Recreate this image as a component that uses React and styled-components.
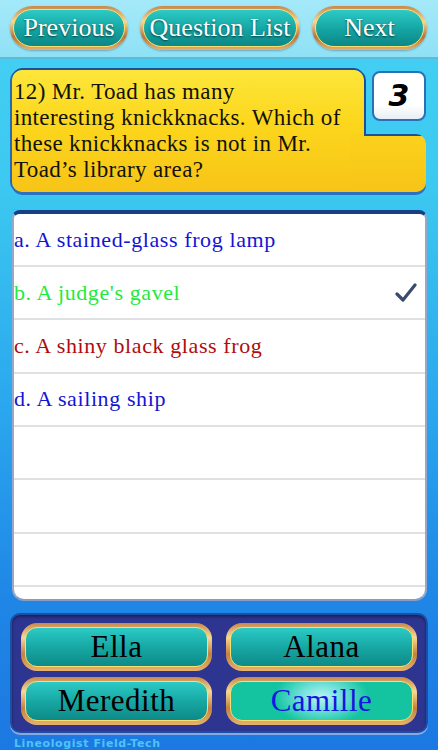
import React from "react";
import styled, { createGlobalStyle } from "styled-components";

const GlobalStyle = createGlobalStyle`
  html, body {
    margin: 0;
    padding: 0;
    background: #1a78e0;
  }
`;

const Screen = styled.div`
  width: 438px;
  height: 750px;
  overflow: hidden;
  display: flex;
  flex-direction: column;
  background: linear-gradient(180deg, #45d2f4 0%, #3cc8f0 25%, #2aa6ee 55%, #1f86e6 80%, #1c78e2 100%);
  font-family: "Liberation Serif", "Times New Roman", serif;
`;

const TopBar = styled.div`
  height: 59px;
  display: flex;
  align-items: center;
  gap: 12px;
  padding: 0 10px;
  box-sizing: border-box;
  background: linear-gradient(180deg, #a4e9f9 0%, #8fe1f6 100%);
  border-bottom: 2px solid #5bbbd8;
`;

const GoldButton = styled.div`
  width: ${(p) => p.$w}px;
  height: 44px;
  box-sizing: border-box;
  padding: 3px;
  border-radius: 22px;
  background: linear-gradient(180deg, #c8894a 0%, #f6d896 35%, #b8743a 70%, #e2b070 100%);
  box-shadow: 0 1px 2px rgba(0, 0, 0, 0.25);
`;

const TealFace = styled.div`
  height: 100%;
  border-radius: 19px;
  border: 1.5px solid #f8e070;
  box-sizing: border-box;
  padding-bottom: 1px;
  display: flex;
  align-items: center;
  justify-content: center;
  background: linear-gradient(180deg, #2ccac6 0%, #14a4a2 55%, #0b8786 100%);
  color: #ffffff;
  font-size: 26px;
  text-shadow: 0 1px 2px rgba(0, 40, 40, 0.8);
  white-space: nowrap;
`;

const QuestionArea = styled.div`
  display: grid;
  grid-template-columns: 352px 1fr;
  grid-template-rows: 58px 64px;
  margin: 11px 12px 0 12px;
`;

const QuestionCard = styled.div`
  grid-row: 1 / 3;
  grid-column: 1;
  background: linear-gradient(180deg, #fde63a 0%, #fcd61c 45%, #f7c418 100%);
  border-radius: 10px 10px 0 10px;
  box-shadow: 0 -2px 0 #1d4f9a, -2px 0 0 #2b67b4, 2px 0 0 #1d4f9a, 0 3px 0 #2c70c0;
  padding: 9px 0 0 2px;
  font-size: 23px;
  letter-spacing: 0.35px;
  line-height: 26px;
  color: #121208;
  white-space: nowrap;
`;

const CardTail = styled.div`
  grid-row: 2;
  grid-column: 2;
  z-index: 1;
  margin: 6px 0 0 -14px;
  background:
    linear-gradient(#1d4f9a, #1d4f9a) 14px 0 / 100% 2px no-repeat,
    linear-gradient(180deg, #fbd21b 0%, #f7c418 100%);
  border-radius: 0 10px 10px 0;
  box-shadow: 0 3px 0 #2c70c0;
`;

const ScoreBox = styled.div`
  grid-row: 1;
  grid-column: 2;
  justify-self: end;
  width: 54px;
  height: 50px;
  margin-top: 1px;
  box-sizing: border-box;
  background: linear-gradient(180deg, #ffffff 0%, #ffffff 70%, #e8eef4 100%);
  border: 2px solid #2a70b8;
  border-radius: 8px;
  display: flex;
  align-items: center;
  justify-content: center;
  font-family: "DejaVu Sans", sans-serif;
  font-weight: 900;
  font-style: italic;
  font-size: 30px;
  color: #000;
`;

const AnswerPanel = styled.div`
  margin: 18px 11px 0 12px;
  height: 392px;
  box-sizing: border-box;
  background: #ffffff;
  border-top: 4px solid #173f86;
  border-left: 2px solid #9aa8c8;
  border-right: 2px solid #9aa8c8;
  border-bottom: 2px solid #8a9cc0;
  border-radius: 8px 8px 12px 12px;
  overflow: hidden;
`;

const AnswerRow = styled.div`
  height: 53.3px;
  box-sizing: border-box;
  border-bottom: 2px solid #e0e0e4;
  display: flex;
  align-items: center;
  justify-content: space-between;
  padding: 0 8px 0 0;
  font-size: 22px;
  letter-spacing: 0.6px;
  color: ${(p) => p.$color};
`;

const Check = styled.svg`
  width: 22px;
  height: 20px;
`;

const NamePanel = styled.div`
  margin: 12px 10px 0 10px;
  height: 120px;
  box-sizing: border-box;
  padding: 8px 9px;
  background: #2d3590;
  border-radius: 10px;
  border: 2px solid #1a4fa8;
  box-shadow: inset 0 2px 3px rgba(0, 0, 0, 0.4), 0 2px 0 #8aa8e0;
  display: grid;
  grid-template-columns: 1fr 1fr;
  gap: 6px 14px;
`;

const NameButton = styled.div`
  height: 48px;
  box-sizing: border-box;
  padding: 4px;
  border-radius: 16px;
  background: linear-gradient(180deg, #c8894a 0%, #f6d896 30%, #c4813e 65%, #e6b36e 100%);
`;

const NameFace = styled.div`
  height: 100%;
  box-sizing: border-box;
  border-radius: 12px;
  border: 1.5px solid #f8e070;
  display: flex;
  align-items: center;
  justify-content: center;
  font-size: 31px;
  letter-spacing: 0.5px;
  color: ${(p) => (p.$selected ? "#1515e0" : "#000")};
  background: ${(p) =>
    p.$selected
      ? "radial-gradient(ellipse 26% 75% at 50% 40%, #b8f4f6 0%, #70e0d8 45%, #14c4a0 100%)"
      : "linear-gradient(180deg, #2ccac6 0%, #17a8a4 50%, #0d8a88 100%)"};
`;

const Footer = styled.div`
  margin: 5px 0 0 14px;
  font-family: "DejaVu Sans", "Liberation Sans", sans-serif;
  font-weight: bold;
  font-size: 11px;
  letter-spacing: 0.6px;
  color: #4ec4f4;
  line-height: 12px;
`;

const questionLines = [
  "12) Mr. Toad has many",
  "interesting knickknacks. Which of",
  "these knickknacks is not in Mr.",
  "Toad’s library area?",
];

const answers = [
  { text: "a. A stained-glass frog lamp", color: "#1414d2" },
  { text: "b. A judge's gavel", color: "#22ea3c", checked: true },
  { text: "c. A shiny black glass frog", color: "#b00c0c" },
  { text: "d. A sailing ship", color: "#1414d2" },
  { text: "" },
  { text: "" },
  { text: "" },
];

const names = [
  { name: "Ella" },
  { name: "Alana" },
  { name: "Meredith" },
  { name: "Camille", selected: true },
];

export default function App() {
  return (
    <>
      <GlobalStyle />
      <Screen>
        <TopBar>
          <GoldButton $w={118}>
            <TealFace>Previous</TealFace>
          </GoldButton>
          <GoldButton $w={160}>
            <TealFace>Question List</TealFace>
          </GoldButton>
          <GoldButton $w={115}>
            <TealFace>Next</TealFace>
          </GoldButton>
        </TopBar>

        <QuestionArea>
          <QuestionCard>
            {questionLines.map((line) => (
              <div key={line}>{line}</div>
            ))}
          </QuestionCard>
          <ScoreBox>3</ScoreBox>
          <CardTail />
        </QuestionArea>

        <AnswerPanel>
          {answers.map((a, i) => (
            <AnswerRow key={i} $color={a.color}>
              <span>{a.text}</span>
              {a.checked && (
                <Check viewBox="0 0 22 20">
                  <path
                    d="M2 11 L8 17 L20 2"
                    fill="none"
                    stroke="#3a4c6e"
                    strokeWidth="3.2"
                    strokeLinecap="round"
                    strokeLinejoin="round"
                  />
                </Check>
              )}
            </AnswerRow>
          ))}
        </AnswerPanel>

        <NamePanel>
          {names.map((n) => (
            <NameButton key={n.name}>
              <NameFace $selected={n.selected}>{n.name}</NameFace>
            </NameButton>
          ))}
        </NamePanel>

        <Footer>Lineologist Field-Tech</Footer>
      </Screen>
    </>
  );
}
